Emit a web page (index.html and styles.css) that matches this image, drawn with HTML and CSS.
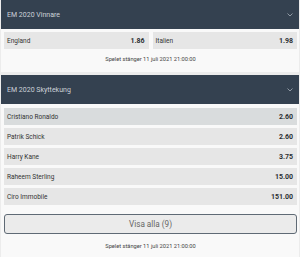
FILE: index.html
```html
<!DOCTYPE html>
<html lang="sv">
<head>
    <meta charset="UTF-8">
    <title>EM 2020</title>
    <link rel="stylesheet" href="styles.css">
</head>
<body>
<div class="market">
    <div class="market-head">
        <span>EM 2020 Vinnare</span>
        <svg class="chev" width="6" height="4" viewBox="0 0 6 4"><path d="M0.5 0.5 L3 3 L5.5 0.5" fill="none" stroke="#9aa3ad" stroke-width="0.9"/></svg>
    </div>
    <div class="market-body">
        <div class="pair">
            <div class="pick"><span>England</span><b>1.86</b></div>
            <div class="pick"><span>Italien</span><b>1.98</b></div>
        </div>
        <p class="closes">Spelet stänger 11 juli 2021 21:00:00</p>
    </div>
</div>

<div class="market">
    <div class="market-head">
        <span>EM 2020 Skyttekung</span>
        <svg class="chev" width="6" height="4" viewBox="0 0 6 4"><path d="M0.5 0.5 L3 3 L5.5 0.5" fill="none" stroke="#9aa3ad" stroke-width="0.9"/></svg>
    </div>
    <div class="market-body">
        <ul class="list">
            <li class="pick hover"><span>Cristiano Ronaldo</span><b>2.60</b></li>
            <li class="pick"><span>Patrik Schick</span><b>2.60</b></li>
            <li class="pick"><span>Harry Kane</span><b>3.75</b></li>
            <li class="pick"><span>Raheem Sterling</span><b>15.00</b></li>
            <li class="pick"><span>Ciro Immobile</span><b>151.00</b></li>
        </ul>
        <button class="more">Visa alla (9)</button>
        <p class="closes">Spelet stänger 11 juli 2021 21:00:00</p>
    </div>
</div>
</body>
</html>
```

FILE: styles.css
```css
body, div, ul, li, p {
    margin: 0;
    padding: 0;
}

ul {
    list-style-type: none;
}

body {
    background: #ececec;
    font-family: Roboto, "Liberation Sans", sans-serif;
    color: #333;
    width: 300px;
    height: 257px;
    overflow: hidden;
}

.market {
    margin: 0 1px 3px;
    background: #f9f9f9;
}

.market-head {
    height: 29px;
    background: #344150;
    color: #cdd2d8;
    font-size: 7px;
    display: flex;
    align-items: center;
    justify-content: space-between;
    padding: 0 6px 0 6px;
}

.market-body {
    padding: 3px 2px 0 3px;
}

.market + .market .market-body {
    padding-top: 4px;
}

.pair {
    display: grid;
    grid-template-columns: 1fr 1fr;
    gap: 4px;
}

.pick {
    height: 17px;
    background: #e6e6e6;
    display: flex;
    align-items: center;
    justify-content: space-between;
    padding: 0 4px 0 3px;
    font-size: 6.5px;
    color: #333;
}

.pick b {
    font-size: 7px;
    font-weight: 700;
    color: #2b2f33;
}

.pick.hover {
    background: #d9dcdd;
}

.list li + li {
    margin-top: 3px;
}

.closes {
    text-align: center;
    font-size: 5.7px;
    line-height: 8px;
    color: #444;
    padding: 6px 0 9px;
}

.market + .market .closes {
    padding: 8px 0 9px;
}

.more {
    display: block;
    width: 100%;
    height: 20px;
    margin-top: 9px;
    background: #ebebeb;
    border: 1px solid #5f6a75;
    border-radius: 3px;
    font-family: Roboto, "Liberation Sans", sans-serif;
    font-size: 8.2px;
    color: #666;
}
```
